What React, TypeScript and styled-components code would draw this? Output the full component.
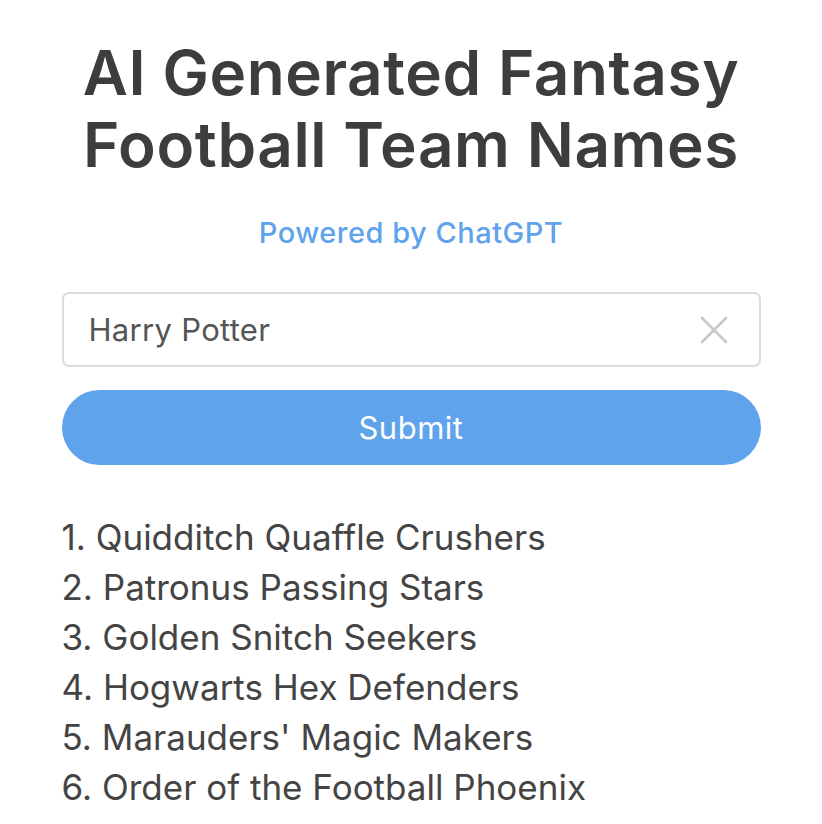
import React, { useState } from 'react';
import styled, { createGlobalStyle } from 'styled-components';

const TEAM_NAMES = [
  'Quidditch Quaffle Crushers',
  'Patronus Passing Stars',
  'Golden Snitch Seekers',
  'Hogwarts Hex Defenders',
  "Marauders' Magic Makers",
  'Order of the Football Phoenix',
];

const GlobalStyle = createGlobalStyle`
  body {
    margin: 0;
    background: #fff;
    font-family: Inter, "Noto Sans", sans-serif;
    color: #404040;
  }
`;

const App: React.FC = () => {
  const [query, setQuery] = useState('Harry Potter');

  return (
    <>
      <GlobalStyle />
      <Page>
        <Title>AI Generated Fantasy Football Team Names</Title>
        <Subtitle>Powered by ChatGPT</Subtitle>
        <InputWrap>
          <SearchInput value={query} onChange={(e) => setQuery(e.target.value)} />
          <ClearButton aria-label="Clear" onClick={() => setQuery('')}>
            <svg width="30" height="30" viewBox="0 0 30 30">
              <path d="M3 3 L27 27 M27 3 L3 27" stroke="#c8c8c8" strokeWidth="2.6" strokeLinecap="round" />
            </svg>
          </ClearButton>
        </InputWrap>
        <SubmitButton>Submit</SubmitButton>
        <NameList>
          {TEAM_NAMES.map((name, i) => (
            <li key={name}>{i + 1}. {name}</li>
          ))}
        </NameList>
      </Page>
    </>
  );
};

export default App;

const Page = styled.div`
  width: 699px;
  margin: 0 auto;
  padding-top: 37px;
  display: flex;
  flex-direction: column;
`;

const Title = styled.h1`
  margin: 0 -20px;
  font-size: 62px;
  line-height: 72px;
  font-weight: 600;
  letter-spacing: 0.6px;
  text-align: center;
  color: #3d3d3d;
`;

const Subtitle = styled.div`
  margin-top: 34px;
  font-size: 29px;
  line-height: 36px;
  font-weight: 500;
  letter-spacing: 0.5px;
  text-align: center;
  color: #5ea3ec;
`;

const InputWrap = styled.div`
  margin-top: 41px;
  height: 75px;
  box-sizing: border-box;
  border: 2px solid #dcdcdc;
  border-radius: 7px;
  display: flex;
  align-items: center;
`;

const SearchInput = styled.input`
  flex: 1;
  border: none;
  outline: none;
  background: transparent;
  padding: 0 0 0 25px;
  font-family: inherit;
  font-size: 31px;
  letter-spacing: 0.3px;
  color: #555;
`;

const ClearButton = styled.button`
  border: none;
  background: transparent;
  padding: 0;
  margin-right: 30px;
  display: flex;
  cursor: pointer;
`;

const SubmitButton = styled.button`
  margin-top: 23px;
  height: 75px;
  border: none;
  border-radius: 38px;
  background: #5ea3ec;
  color: #fff;
  font-family: inherit;
  font-size: 31px;
  letter-spacing: 0.5px;
  cursor: pointer;
`;

const NameList = styled.ul`
  list-style: none;
  margin: 47px 0 0;
  padding: 0;
  font-size: 35px;
  line-height: 50px;
  color: #444;
`;
